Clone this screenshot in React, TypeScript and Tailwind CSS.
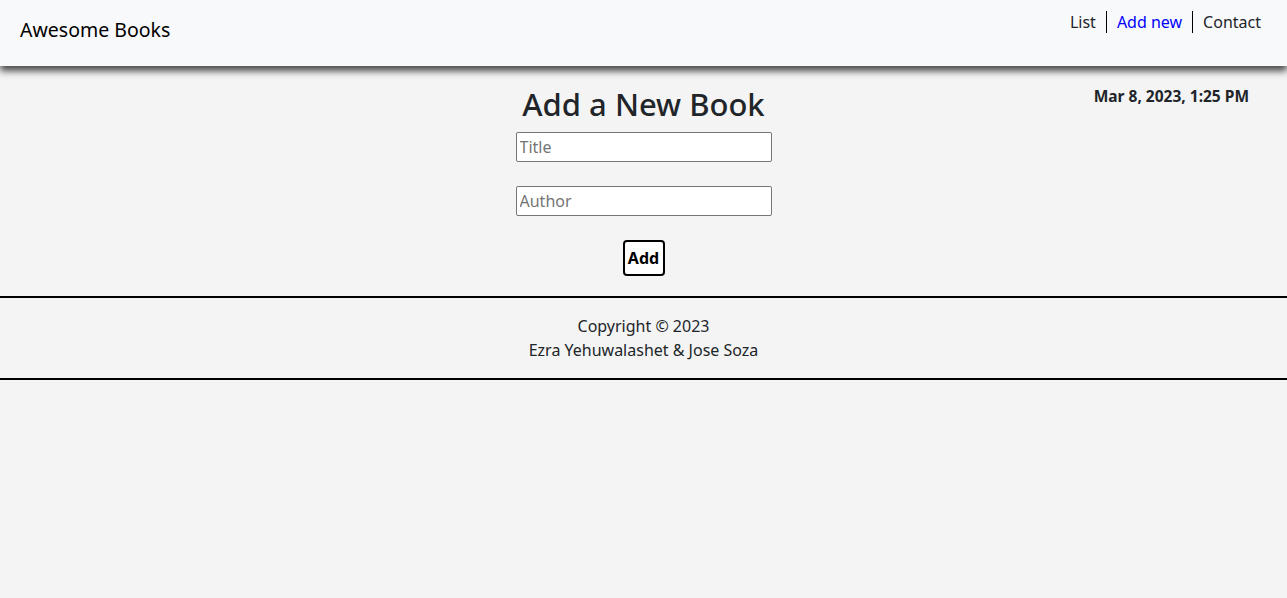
import { useState } from "react";

export default function App() {
  const [title, setTitle] = useState("");
  const [author, setAuthor] = useState("");

  return (
    <div className="min-h-[598px] bg-[#f4f4f4] text-[#212529] font-['Noto_Sans',sans-serif]">
      {/* navbar */}
      <nav className="relative z-10 flex h-[66px] items-start justify-between bg-[#f8f9fa] pl-5 pr-[26px] shadow-[0_5px_7px_rgba(0,0,0,0.7)]">
        <a className="mt-[15px] text-[19.5px] text-black">Awesome Books</a>
        <ul className="mt-[11px] flex items-stretch text-[16px]">
          <li className="border-r border-black pr-[10px] leading-[22px]">List</li>
          <li className="border-r border-black px-[10px] leading-[22px] text-[#0000ff]">Add new</li>
          <li className="pl-[10px] leading-[22px]">Contact</li>
        </ul>
      </nav>

      {/* add form */}
      <main className="grid grid-cols-[1fr_auto_1fr] pt-[22px]">
        <div />
        <form
          className="flex flex-col items-center"
          onSubmit={(e) => e.preventDefault()}
        >
          <h1 className="mb-[4px] text-[31px] font-medium leading-[32px]">Add a New Book</h1>
          <input
            value={title}
            onChange={(e) => setTitle(e.target.value)}
            placeholder="Title"
            className="mt-[8px] h-[30px] w-[256px] rounded-[2px] border border-[#767676] bg-white px-[3px] text-[16px] placeholder:text-[#757575]"
          />
          <input
            value={author}
            onChange={(e) => setAuthor(e.target.value)}
            placeholder="Author"
            className="mt-[24px] h-[30px] w-[256px] rounded-[2px] border border-[#767676] bg-white px-[3px] text-[16px] placeholder:text-[#757575]"
          />
          <button className="mt-[24px] h-[36px] w-[42px] rounded-[4px] border-2 border-black bg-white text-[16px] font-bold text-black">
            Add
          </button>
        </form>
        <p className="-mt-[3px] justify-self-end pr-[38px] text-[15.5px] font-bold">Mar 8, 2023, 1:25 PM</p>
      </main>

      {/* footer */}
      <footer className="mt-[20px] border-y-2 border-black py-[16px] text-center text-[16px] leading-[24px]">
        <p>Copyright © 2023</p>
        <p>Ezra Yehuwalashet &amp; Jose Soza</p>
      </footer>
    </div>
  );
}
